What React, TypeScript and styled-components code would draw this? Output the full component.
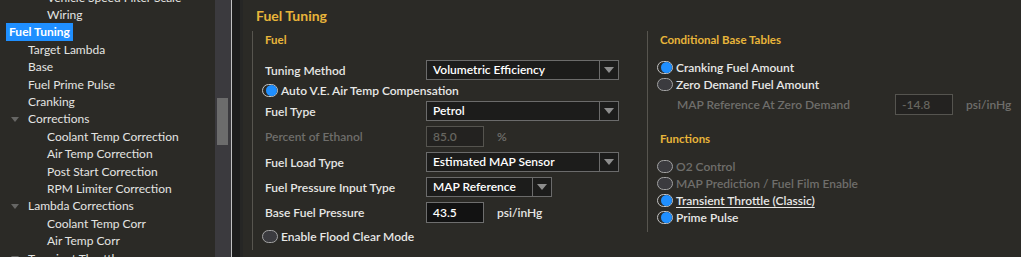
import React from "react";
import styled, { createGlobalStyle } from "styled-components";

const GlobalStyle = createGlobalStyle`
  html, body {
    margin: 0;
    padding: 0;
    background: #2b2a26;
  }
  body {
    font-family: Lato, "Segoe UI", "Liberation Sans", sans-serif;
    -webkit-font-smoothing: antialiased;
  }
`;

const Shell = styled.div`
  display: flex;
  width: 1021px;
  height: 257px;
  overflow: hidden;
  background: #2b2a26;
`;

/* ---------- tree ---------- */

const Tree = styled.div`
  width: 215px;
  flex-shrink: 0;
  overflow: hidden;
`;

const TreeList = styled.div`
  margin-top: -11px; // scrolled
  display: flex;
  flex-direction: column;
`;

const TreeRow = styled.div<{ $level: number }>`
  height: 17.4px;
  display: flex;
  align-items: center;
  margin-left: ${(p) => p.$level * 19 - 9}px;
  white-space: nowrap;
`;

const Expander = styled.div`
  width: 18px;
  flex-shrink: 0;
  display: flex;
  align-items: center;
`;

const Caret = styled.span`
  margin-left: 1px;
  width: 0;
  height: 0;
  border-left: 4.5px solid transparent;
  border-right: 4.5px solid transparent;
  border-top: 5px solid #666664;
`;

const ItemLabel = styled.span<{ $selected?: boolean }>`
  font-size: 12px;
  height: 18px;
  line-height: 18px;
  padding: 0 3px;
  margin-left: -3px;
  color: ${(p) => (p.$selected ? "#ffffff" : "#e4e4e2")};
  font-weight: ${(p) => (p.$selected ? 700 : 400)};
  background: ${(p) => (p.$selected ? "#1f8fff" : "transparent")};
`;

const ScrollTrack = styled.div`
  width: 16px;
  flex-shrink: 0;
  background: #3b3a3e;
  padding-top: 98px;
  box-sizing: border-box;
`;

const ScrollThumb = styled.div`
  margin-left: 2px;
  width: 11px;
  height: 47px;
  background: #6c6c6c;
`;

const Splitter = styled.div`
  width: 12px;
  flex-shrink: 0;
  box-sizing: border-box;
  border-left: 1px solid #c2c2c2;
  border-right: 3px solid #262625;
  background: #1d1d1c;
`;

/* ---------- main ---------- */

const Main = styled.div`
  flex: 1;
  padding-left: 9px;
  display: flex;
  flex-direction: column;
`;

const PageTitle = styled.div`
  height: 31px;
  padding: 0 0 1px 4px;
  box-sizing: border-box;
  display: flex;
  align-items: center;
  font-size: 14px;
  font-weight: 700;
  color: #e8b53a;
`;

const Columns = styled.div`
  display: grid;
  grid-template-columns: 395px 1fr;
  align-items: start;
`;

const Group = styled.div<{ $pb: number }>`
  display: flex;
  flex-direction: column;
  border-left: 1px solid #57554f;
  padding: 0 0 ${(p) => p.$pb}px 12px;
`;

const GroupTitle = styled.div<{ $mt?: number; $mb: number }>`
  height: 18px;
  line-height: 18px;
  font-size: 11.5px;
  font-weight: 700;
  color: #e8b53a;
  margin-top: ${(p) => p.$mt ?? 0}px;
  margin-bottom: ${(p) => p.$mb}px;
`;

const FieldRow = styled.div<{ $h?: number; $mt?: number }>`
  height: ${(p) => p.$h ?? 25.3}px;
  margin-top: ${(p) => p.$mt ?? 0}px;
  display: flex;
  align-items: center;
`;

const Label = styled.div<{ $disabled?: boolean; $w?: number; $indent?: number }>`
  width: ${(p) => p.$w ?? 161}px;
  box-sizing: border-box;
  padding-left: ${(p) => p.$indent ?? 0}px;
  flex-shrink: 0;
  font-size: 12px;
  font-weight: 600;
  white-space: nowrap;
  color: ${(p) => (p.$disabled ? "#6f6e6b" : "#e6e6e4")};
`;

const Select = styled.div<{ $w: number }>`
  width: ${(p) => p.$w}px;
  height: 20px;
  box-sizing: border-box;
  border: 1px solid #6b6b6b;
  background: #1c1c1b;
  display: flex;
`;

const SelectValue = styled.div`
  flex: 1;
  padding-left: 6px;
  font-size: 12px;
  font-weight: 600;
  line-height: 18px;
  color: #ffffff;
`;

const SelectArrow = styled.div`
  width: 18px;
  border-left: 1px solid #6b6b6b;
  display: flex;
  align-items: center;
  justify-content: center;
  &::after {
    content: "";
    width: 0;
    height: 0;
    border-left: 5px solid transparent;
    border-right: 5px solid transparent;
    border-top: 6px solid #8d8d8d;
  }
`;

const Input = styled.div<{ $disabled?: boolean }>`
  width: 58px;
  height: 21px;
  box-sizing: border-box;
  padding-left: 6px;
  line-height: 19px;
  font-size: 12px;
  font-weight: 600;
  border: 1px solid ${(p) => (p.$disabled ? "#55544f" : "#6e6e6e")};
  background: ${(p) => (p.$disabled ? "#232220" : "#121212")};
  color: ${(p) => (p.$disabled ? "#66655f" : "#ffffff")};
`;

const Unit = styled.span<{ $disabled?: boolean }>`
  margin-left: 13px;
  font-size: 12px;
  font-weight: 600;
  white-space: nowrap;
  color: ${(p) => (p.$disabled ? "#6f6e6b" : "#e6e6e4")};
`;

const ToggleRow = styled.div<{ $h: number; $mt?: number }>`
  height: ${(p) => p.$h}px;
  margin-top: ${(p) => p.$mt ?? 0}px;
  display: flex;
  align-items: center;
  margin-left: -3px;
`;

const Toggle = styled.div<{ $on: boolean }>`
  width: 16px;
  height: 13px;
  box-sizing: border-box;
  border-radius: 7px;
  border: 1px solid ${(p) => (p.$on ? "#c4c4c4" : "#a2a2a2")};
  background: ${(p) => (p.$on ? "#2b2a26" : "#3b3b3f")};
  display: flex;
  justify-content: flex-end;
  align-items: center;
  flex-shrink: 0;
  &::after {
    content: "";
    width: 11px;
    height: 11px;
    border-radius: 50%;
    background: ${(p) => (p.$on ? "#1f8fff" : "transparent")};
  }
`;

const ToggleText = styled.span<{ $disabled?: boolean; $underline?: boolean }>`
  margin-left: 3px;
  font-size: 12px;
  font-weight: 600;
  white-space: nowrap;
  color: ${(p) => (p.$disabled ? "#6f6e6b" : "#e8e8e6")};
  text-decoration: ${(p) => (p.$underline ? "underline" : "none")};
  text-underline-offset: 2px;
`;

type TreeItem = { text: string; level: number; expanded?: boolean; selected?: boolean };

const treeItems: TreeItem[] = [
  { text: "Vehicle Speed Filter Scale", level: 2 },
  { text: "Wiring", level: 2 },
  { text: "Fuel Tuning", level: 0, expanded: true, selected: true },
  { text: "Target Lambda", level: 1 },
  { text: "Base", level: 1 },
  { text: "Fuel Prime Pulse", level: 1 },
  { text: "Cranking", level: 1 },
  { text: "Corrections", level: 1, expanded: true },
  { text: "Coolant Temp Correction", level: 2 },
  { text: "Air Temp Correction", level: 2 },
  { text: "Post Start Correction", level: 2 },
  { text: "RPM Limiter Correction", level: 2 },
  { text: "Lambda Corrections", level: 1, expanded: true },
  { text: "Coolant Temp Corr", level: 2 },
  { text: "Air Temp Corr", level: 2 },
  { text: "Transient Throttle", level: 1, expanded: true },
];

function Dropdown({ value, width }: { value: string; width: number }) {
  return (
    <Select $w={width}>
      <SelectValue>{value}</SelectValue>
      <SelectArrow />
    </Select>
  );
}

function Switch(props: {
  on: boolean;
  text: string;
  h: number;
  mt?: number;
  disabled?: boolean;
  underline?: boolean;
}) {
  return (
    <ToggleRow $h={props.h} $mt={props.mt}>
      <Toggle $on={props.on} />
      <ToggleText $disabled={props.disabled} $underline={props.underline}>
        {props.text}
      </ToggleText>
    </ToggleRow>
  );
}

export default function App() {
  return (
    <>
      <GlobalStyle />
      <Shell>
        <Tree>
          <TreeList>
            {treeItems.map((it) => (
              <TreeRow key={it.text} $level={it.level}>
                <Expander>{it.expanded && <Caret />}</Expander>
                <ItemLabel $selected={it.selected}>{it.text}</ItemLabel>
              </TreeRow>
            ))}
          </TreeList>
        </Tree>
        <ScrollTrack>
          <ScrollThumb />
        </ScrollTrack>
        <Splitter />

        <Main>
          <PageTitle>Fuel Tuning</PageTitle>
          <Columns>
            <Group $pb={6}>
              <GroupTitle $mb={8.5}>Fuel</GroupTitle>
              <FieldRow>
                <Label>Tuning Method</Label>
                <Dropdown value="Volumetric Efficiency" width={193} />
              </FieldRow>
              <Switch on h={16} text="Auto V.E. Air Temp Compensation" />
              <FieldRow>
                <Label>Fuel Type</Label>
                <Dropdown value="Petrol" width={193} />
              </FieldRow>
              <FieldRow>
                <Label $disabled>Percent of Ethanol</Label>
                <Input $disabled>85.0</Input>
                <Unit $disabled>%</Unit>
              </FieldRow>
              <FieldRow>
                <Label>Fuel Load Type</Label>
                <Dropdown value="Estimated MAP Sensor" width={193} />
              </FieldRow>
              <FieldRow>
                <Label>Fuel Pressure Input Type</Label>
                <Dropdown value="MAP Reference" width={126} />
              </FieldRow>
              <FieldRow>
                <Label>Base Fuel Pressure</Label>
                <Input>43.5</Input>
                <Unit>psi/inHg</Unit>
              </FieldRow>
              <Switch on={false} h={16} mt={3} text="Enable Flood Clear Mode" />
            </Group>

            <Group $pb={6.5}>
              <GroupTitle $mb={9.5}>Conditional Base Tables</GroupTitle>
              <Switch on h={17} text="Cranking Fuel Amount" />
              <Switch on={false} h={17} text="Zero Demand Fuel Amount" />
              <FieldRow $h={21} $mt={1.5}>
                <Label $disabled $w={235} $indent={17}>
                  MAP Reference At Zero Demand
                </Label>
                <Input $disabled>-14.8</Input>
                <Unit $disabled>psi/inHg</Unit>
              </FieldRow>
              <GroupTitle $mt={15} $mb={9.5}>
                Functions
              </GroupTitle>
              <Switch on={false} disabled h={17} text="O2 Control" />
              <Switch on={false} disabled h={17} text="MAP Prediction / Fuel Film Enable" />
              <Switch on underline h={17} text="Transient Throttle (Classic)" />
              <Switch on h={17} text="Prime Pulse" />
            </Group>
          </Columns>
        </Main>
      </Shell>
    </>
  );
}
